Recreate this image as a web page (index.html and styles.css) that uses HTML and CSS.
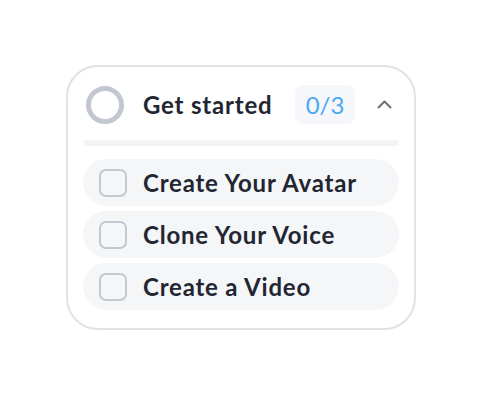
FILE: index.html
```html
<!DOCTYPE html>
<html>
<head>
<meta charset="utf-8">
<link rel="stylesheet" href="styles.css">
</head>
<body>
<div class="card">
  <div class="header">
    <span class="ring"></span>
    <span class="title">Get started</span>
    <span class="badge">0/3</span>
    <svg class="chevron" width="15" height="9" viewBox="0 0 15 9"><path d="M1.5 7.5 L7.5 1.5 L13.5 7.5" fill="none" stroke="#6b7080" stroke-width="2" stroke-linecap="round" stroke-linejoin="round"/></svg>
  </div>
  <div class="bar"></div>
  <div class="list">
    <div class="item"><span class="box"></span><span class="label">Create Your Avatar</span></div>
    <div class="item"><span class="box"></span><span class="label">Clone Your Voice</span></div>
    <div class="item"><span class="box"></span><span class="label">Create a Video</span></div>
  </div>
</div>
</body>
</html>
```
FILE: styles.css
```css
html, body { margin: 0; padding: 0; background: #fff; }
body { font-family: Lato, "Noto Sans", sans-serif; }
.card {
  margin: 65px 0 0 66px;
  width: 350px;
  box-sizing: border-box;
  border: 2px solid #e2e2e5;
  border-radius: 32px;
  padding: 18px 15px 18px 15px;
}
.header {
  display: flex;
  align-items: center;
  height: 39px;
  padding: 0 7px 0 3px;
}
.ring {
  width: 38px; height: 38px;
  box-sizing: border-box;
  border: 5px solid #c3c7d1;
  border-radius: 50%;
  flex: none;
}
.title {
  margin-left: 19px;
  flex: 1;
  font-size: 24px;
  line-height: 28px;
  font-weight: 700;
  letter-spacing: 0.8px;
  color: #222632;
}
.badge {
  width: 60px; height: 39px;
  border-radius: 8px;
  background: #f5f7fa;
  color: #4ba9f2;
  font-size: 24px;
  line-height: 28px;
  display: flex; align-items: center; justify-content: center;
}
.chevron { margin-left: 22px; flex: none; }
.bar {
  margin-top: 16px;
  height: 6px;
  border-radius: 3px;
  background: #f3f4f6;
}
.list {
  margin-top: 13px;
  display: flex;
  flex-direction: column;
  gap: 5px;
}
.item {
  height: 47px;
  border-radius: 24px;
  background: #f5f6f8;
  display: flex;
  align-items: center;
  padding-left: 16px;
}
.box {
  width: 28px; height: 28px;
  box-sizing: border-box;
  border: 2px solid #c3c7d1;
  border-radius: 7px;
  flex: none;
}
.label {
  margin-left: 16px;
  font-size: 24px;
  line-height: 28px;
  font-weight: 700;
  letter-spacing: 0.8px;
  color: #222632;
}
```
